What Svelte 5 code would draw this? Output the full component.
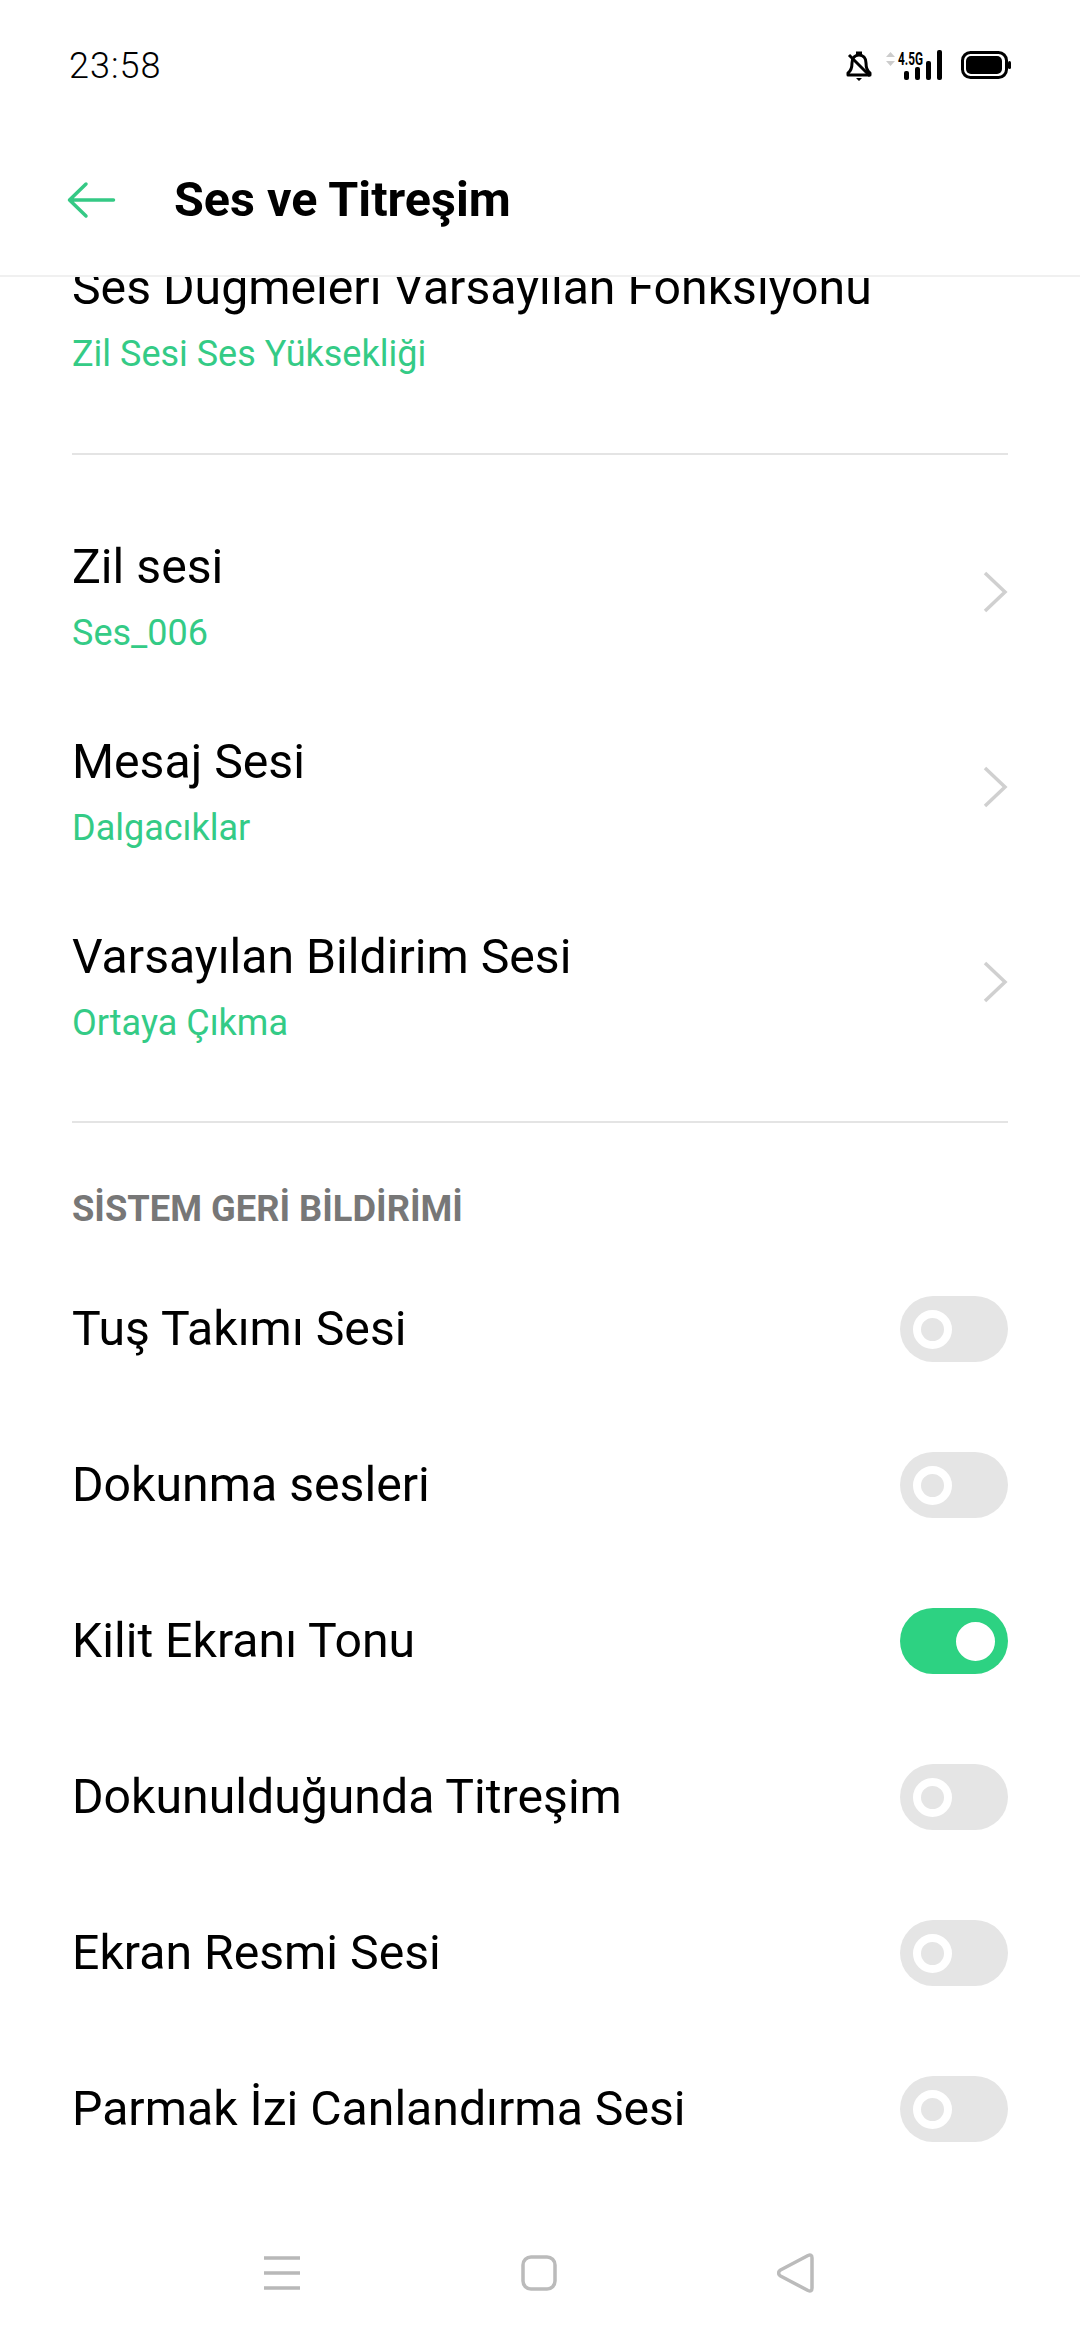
<script>
	const topRows = [{ title: 'Ses Düğmeleri Varsayılan Fonksiyonu', sub: 'Zil Sesi Ses Yüksekliği' }];
	const soundRows = [
		{ title: 'Zil sesi', sub: 'Ses_006' },
		{ title: 'Mesaj Sesi', sub: 'Dalgacıklar' },
		{ title: 'Varsayılan Bildirim Sesi', sub: 'Ortaya Çıkma' }
	];
	const feedback = [
		{ title: 'Tuş Takımı Sesi', on: false },
		{ title: 'Dokunma sesleri', on: false },
		{ title: 'Kilit Ekranı Tonu', on: true },
		{ title: 'Dokunulduğunda Titreşim', on: false },
		{ title: 'Ekran Resmi Sesi', on: false },
		{ title: 'Parmak İzi Canlandırma Sesi', on: false }
	];
</script>

<div class="phone">
	<div class="status">
		<span class="time">23:58</span>
		<svg class="status-icons" width="170" height="34" viewBox="0 0 170 34">
			<!-- bell, muted -->
			<g transform="translate(-2 0)">
				<g fill="none" stroke="#000" stroke-width="3">
					<path d="M4 24c3-2 4-5 4-10 0-5 3-8 7-8s7 3 7 8c0 5 1 8 4 10v2H4z" stroke-linejoin="round" />
					<path d="M5 6l21 21" />
				</g>
				<path d="M12 2.500h6v4h-6zM12 29h6l-3 3z" fill="#000" />
			</g>
			<!-- data arrows -->
			<path d="M44.500 3l4.500 5h-9zM44.500 17l4.500-5h-9z" fill="#ccc" />
			<text x="52" y="16" class="net" textLength="25" lengthAdjust="spacingAndGlyphs">4.5G</text>
			<g fill="#000">
				<rect x="58" y="22" width="5" height="9" rx="2" />
				<rect x="69" y="18" width="5" height="13" rx="2" />
				<rect x="80" y="12" width="5" height="19" rx="2" />
				<rect x="91" y="1" width="5" height="30" rx="2" />
			</g>
			<rect x="116.500" y="3.500" width="44" height="25" rx="8" fill="none" stroke="#000" stroke-width="3" />
			<rect x="120" y="7" width="36" height="18" rx="5" fill="#000" />
			<rect x="162" y="12" width="3" height="8" rx="1.500" fill="#000" />
		</svg>
	</div>

	<header class="appbar">
		<svg width="50" height="40" viewBox="0 0 50 40">
			<path d="M47.500 20H3.500M20 4 3.500 20 20 36" fill="none" stroke="#35c985" stroke-width="3.500" stroke-linecap="round" stroke-linejoin="round" />
		</svg>
		<h1>Ses ve Titreşim</h1>
	</header>

	<main class="content">
		<section class="group clipped">
			{#each topRows as row}
				<div class="row link">
					<div class="text">
						<div class="title">{row.title}</div>
						<div class="sub">{row.sub}</div>
					</div>
				</div>
			{/each}
		</section>

		<section class="group">
			{#each soundRows as row}
				<div class="row link">
					<div class="text">
						<div class="title">{row.title}</div>
						<div class="sub">{row.sub}</div>
					</div>
					<svg class="chevron" width="26" height="42" viewBox="0 0 26 42">
						<path d="M3 2l20 19L3 40" fill="none" stroke="#d0d0d0" stroke-width="3.500" />
					</svg>
				</div>
			{/each}
		</section>

		<h2>SİSTEM GERİ BİLDİRİMİ</h2>

		{#each feedback as item}
			<div class="row switch-row">
				<div class="title">{item.title}</div>
				<div class="switch" class:on={item.on}><span class="knob"></span></div>
			</div>
		{/each}
	</main>

	<nav class="navbar">
		<svg width="36" height="34" viewBox="0 0 36 34">
			<path d="M0 2h36M0 17h36M0 32h36" stroke="#b8b8b8" stroke-width="3.500" fill="none" />
		</svg>
		<svg width="36" height="36" viewBox="0 0 36 36">
			<rect x="2" y="2" width="32" height="32" rx="8" fill="none" stroke="#bbb" stroke-width="3.500" />
		</svg>
		<svg width="37" height="40" viewBox="0 0 37 40">
			<path d="M31 2.500 3.500 17c-2.500 1.500-2.500 4.500 0 6L31 37.500c2.500 1 4 .5 4-2.500V5c0-3-1.500-3.500-4-2.500z" fill="none" stroke="#bbb" stroke-width="3.500" stroke-linejoin="round" />
		</svg>
	</nav>
</div>

<style>
	:global(body) {
		margin: 0;
		background: #fff;
	}

	.phone {
		width: 1080px;
		height: 2340px;
		display: flex;
		flex-direction: column;
		overflow: hidden;
		background: #fff;
		color: #000;
		font-family: Roboto, 'Liberation Sans', sans-serif;
	}

	.status {
		height: 100px;
		flex: none;
		padding: 32px 64px 0 69px;
		display: flex;
		align-items: center;
		justify-content: space-between;
		box-sizing: border-box;
	}

	.status-icons {
		overflow: visible;
	}

	.time {
		font-size: 36px;
		font-weight: 300;
		letter-spacing: 1px;
	}

	.net {
		font-family: Roboto, sans-serif;
		font-size: 19px;
		font-weight: 700;
	}

	.appbar {
		height: 177px;
		flex: none;
		padding: 24px 0 0 66px;
		display: flex;
		align-items: center;
		gap: 58px;
		box-sizing: border-box;
		border-bottom: 2px solid #f0f0f0;
		background: #fff;
		position: relative;
		z-index: 1;
	}

	h1 {
		margin: 0;
		font-size: 48.5px;
		font-weight: 700;
	}

	.content {
		flex: 1;
		min-height: 0;
		overflow: hidden;
		padding: 0 72px;
	}

	.group {
		padding: 44px 0 37px;
		border-bottom: 2px solid #e4e4e4;
	}

	.clipped {
		margin-top: -57px;
		padding: 0 0 38px;
	}

	.row {
		display: flex;
		align-items: center;
		justify-content: space-between;
	}

	.link {
		height: 195px;
	}

	.title {
		font-size: 48.2px;
		line-height: 54px;
	}

	.sub {
		margin-top: 18px;
		font-size: 36px;
		line-height: 42px;
		color: #34cb86;
	}

	.chevron {
		margin-top: -9px;
	}

	h2 {
		margin: 0;
		height: 128px;
		padding-top: 64px;
		box-sizing: border-box;
		font-size: 36.3px;
		line-height: 44px;
		font-weight: 700;
		color: #777;
	}

	.switch-row {
		height: 156px;
	}

	.switch {
		width: 108px;
		height: 66px;
		padding: 0 13px;
		border-radius: 33px;
		background: #e5e5e5;
		box-sizing: border-box;
		display: flex;
		align-items: center;
	}

	.knob {
		width: 39px;
		height: 39px;
		box-sizing: border-box;
		border: 8px solid #fff;
		border-radius: 50%;
	}

	.switch.on {
		background: #2dd282;
		justify-content: flex-end;
	}

	.switch.on .knob {
		background: #fff;
	}

	.navbar {
		flex: none;
		height: 134px;
		padding: 0 266px 0 264px;
		display: flex;
		align-items: center;
		justify-content: space-between;
		box-sizing: border-box;
	}
</style>
